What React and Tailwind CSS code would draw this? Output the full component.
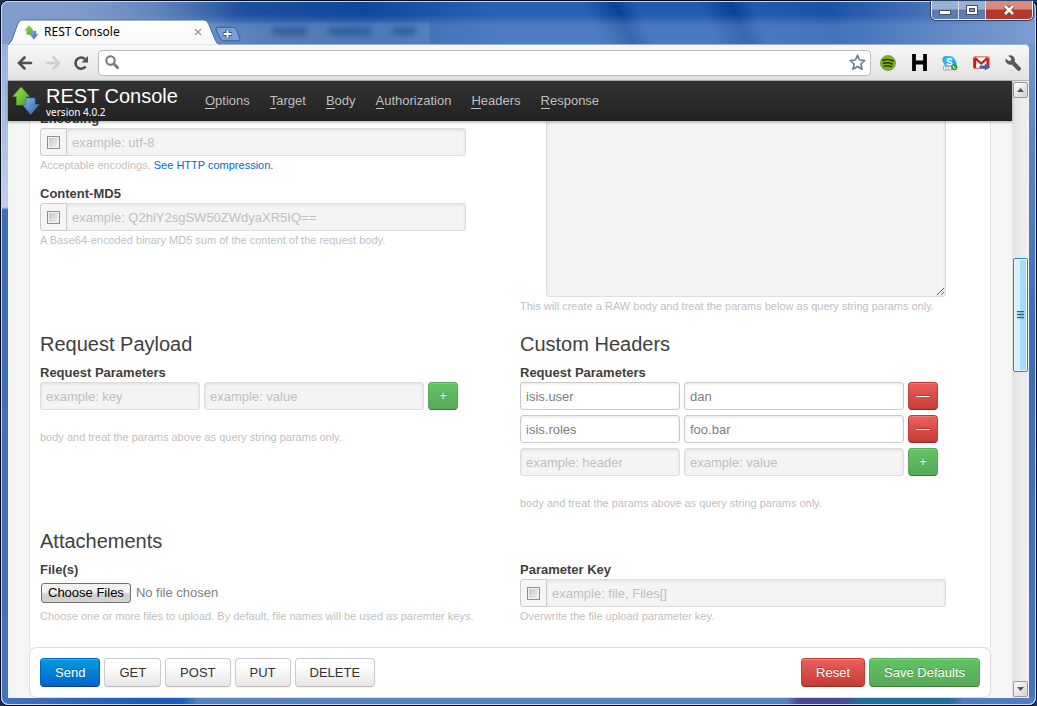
import React from "react";

const FONT = "font-['Liberation_Sans',Arial,sans-serif]";
const FIELD =
  "h-7 min-w-0 border border-[#ddd] bg-[#f4f4f4] px-[5px] text-[13px] text-[#808080] placeholder:text-[#bfbfbf] placeholder:opacity-100 shadow-[inset_0_1px_3px_rgba(0,0,0,0.1)] outline-none";
const FILLED =
  "h-7 min-w-0 rounded-[3px] border border-[#ccc] bg-white px-[5px] text-[13px] text-[#808080] shadow-[inset_0_1px_3px_rgba(0,0,0,0.1)] outline-none";
const BTN = "h-[29px] cursor-pointer rounded-[4px] border px-[14px] text-[13px] leading-[18px]";
const PLAIN =
  "border-[#ccc] border-b-[#bbb] bg-linear-to-b from-white from-25% to-[#e6e6e6] text-[#333] shadow-[inset_0_1px_0_rgba(255,255,255,0.2),0_1px_2px_rgba(0,0,0,0.05)]";
const RED =
  "border-[#c43c35] border-b-[#882a25] bg-linear-to-b from-[#ee5f5b] to-[#c43c35] text-white [text-shadow:0_-1px_0_rgba(0,0,0,0.25)] shadow-[inset_0_1px_0_rgba(255,255,255,0.2)]";
const GREEN =
  "border-[#57a957] border-b-[#3d773d] bg-linear-to-b from-[#62c462] to-[#57a957] text-white [text-shadow:0_-1px_0_rgba(0,0,0,0.25)] shadow-[inset_0_1px_0_rgba(255,255,255,0.2)]";
const BLUE =
  "border-[#0064cd] border-b-[#003f81] bg-linear-to-b from-[#049cdb] to-[#0064cd] text-white [text-shadow:0_-1px_0_rgba(0,0,0,0.25)] shadow-[inset_0_1px_0_rgba(255,255,255,0.2)]";

function Logo({ className }) {
  return (
    <svg className={className} viewBox="0 0 28 30" aria-hidden="true">
      <defs>
        <linearGradient id="lg" x1="0" y1="0" x2="1" y2="1">
          <stop offset="0" stopColor="#a4e455" />
          <stop offset="1" stopColor="#4aa51a" />
        </linearGradient>
        <linearGradient id="lb" x1="0" y1="0" x2="1" y2="1">
          <stop offset="0" stopColor="#8db8e8" />
          <stop offset="1" stopColor="#2c5f9f" />
        </linearGradient>
      </defs>
      <path d="M9 1 L17.5 10.5 H14 V19 H4.5 V10.5 H0.8 Z" fill="url(#lg)" stroke="#54a823" strokeWidth=".6" />
      <path d="M14 12 H23 V18.5 H27 L18.7 28.5 L10.5 18.5 H14 Z" fill="url(#lb)" stroke="#4474b0" strokeWidth=".6" />
    </svg>
  );
}

function TickBox({ label }) {
  return (
    <span className="flex h-7 w-[27px] shrink-0 items-center justify-center rounded-l-[3px] border border-[#ccc] bg-[#f5f5f5]">
      <input
        type="checkbox"
        aria-label={label}
        className="size-[13px] appearance-none border border-[#8e8f8f] bg-linear-to-br from-[#b9bec8] to-[#fafafa] shadow-[inset_0_0_0_1px_#f4f4f4]"
      />
    </span>
  );
}

function OptionalField({ id, label, placeholder, children }) {
  return (
    <div>
      <label htmlFor={id} className="block text-[13px] leading-[18px] font-bold text-[#404040]">{label}</label>
      <div className="flex max-w-[426px]">
        <TickBox label={"Enable " + label} />
        <input id={id} placeholder={placeholder} className={"flex-1 rounded-r-[3px] border-l-0 " + FIELD} />
      </div>
      <Hint>{children}</Hint>
    </div>
  );
}

function Hint({ children }) {
  return <p className="text-[11px] leading-[18px] whitespace-nowrap text-[#bfbfbf]">{children}</p>;
}

function Heading({ children }) {
  return <h2 className="mb-1 text-xl leading-8 text-[#404040]">{children}</h2>;
}

function ParamRow({ name, value, keyHint }) {
  const filled = Boolean(name);
  const cls = filled ? FILLED : "rounded-[3px] " + FIELD;
  return (
    <div className="flex gap-1">
      <input aria-label="Parameter name" defaultValue={name} placeholder={keyHint} className={"w-40 " + cls} />
      <input aria-label="Parameter value" defaultValue={value} placeholder="example: value" className={"w-55 " + cls} />
      <button
        type="button"
        aria-label={filled ? "Remove parameter" : "Add parameter"}
        className={"flex h-7 w-[30px] items-center justify-center rounded-[4px] border text-[13px] " + (filled ? RED : GREEN)}
      >
        {filled ? "—" : "+"}
      </button>
    </div>
  );
}

function Params({ title, rows, keyHint }) {
  return (
    <section>
      <Heading>{title}</Heading>
      <h3 className="text-[13px] leading-[18px] font-bold text-[#404040]">Request Parameters</h3>
      <div className="mb-[18px] flex flex-col gap-[5px]">
        {rows.map((r) => (
          <ParamRow key={r[0]} name={r[0]} value={r[1]} />
        ))}
        <ParamRow keyHint={keyHint} />
      </div>
      <Hint>body and treat the params above as query string params only.</Hint>
    </section>
  );
}

function TitleBar() {
  return (
    <div className="relative flex h-[43px] shrink-0 items-end">
      <div className="absolute top-[20px] left-[180px] h-[22px] w-[242px] bg-white/10 blur-[1px]" />
      <div className="absolute top-[25px] left-[264px] flex gap-5 blur-[3px]" aria-hidden="true">
        <span className="h-2 w-9 rounded bg-[#234f91]/70" />
        <span className="h-2 w-11 rounded bg-[#234f91]/70" />
        <span className="h-2 w-6 rounded bg-[#234f91]/70" />
      </div>
      <div className="relative flex h-[26px] w-[215px] items-center pr-[19px] pl-4">
        <svg className="absolute inset-0 h-full w-full" viewBox="0 0 215 26" preserveAspectRatio="none" aria-hidden="true">
          <defs>
            <linearGradient id="tab" x1="0" y1="0" x2="0" y2="1">
              <stop offset="0" stopColor="#fff" />
              <stop offset="1" stopColor="#f8f8f8" />
            </linearGradient>
          </defs>
          <path d="M0 26 C3 23 4 21 5 18 L9 7 C11 2 12 1 16 1 H194 C198 1 199 2 201 6 L206 18 C208 23 209 25 212 26 Z" fill="url(#tab)" stroke="#4b6c9f" strokeWidth="1" />
          <path d="M1 26 H211" stroke="#f8f8f8" strokeWidth="1.4" />
        </svg>
        <Logo className="relative size-[15px]" />
        <span className="relative ml-[5px] flex-1 font-['Noto_Sans','Open_Sans',sans-serif] text-xs text-black">REST Console</span>
        <button type="button" aria-label="Close tab" className="relative flex size-3 items-center justify-center">
          <svg className="size-2" viewBox="0 0 8 8" aria-hidden="true">
            <path d="M1 1 L7 7 M7 1 L1 7" stroke="#999" strokeWidth="1.3" />
          </svg>
        </button>
      </div>
      <button type="button" aria-label="New tab" className="relative mb-[3px] -ml-2 h-4 w-[26px]">
        <svg className="h-full w-full" viewBox="0 0 27 16" aria-hidden="true">
          <path d="M3 1 H18 Q21 1 22 3 L26 13 Q26 15 24 15 H9 Q6 15 5 12 L1 3 Q1 1 3 1 Z" fill="#7b9fd3" stroke="#315a98" />
          <path d="M13 3.5 V12.5 M8.5 8 H17.5" stroke="#38577f" strokeWidth="4" />
          <path d="M13 4 V12 M9 8 H17" stroke="#fff" strokeWidth="2" />
        </svg>
      </button>
      <div className="absolute top-[-1px] right-[-4px] flex h-[19px] overflow-hidden rounded-b-[5px] border border-t-0 border-[#eef3fb] shadow-[0_0_0_1px_#2a4370]">
        <button type="button" aria-label="Minimize" className="flex w-[27px] items-end justify-center border-r border-[#d5deee] bg-linear-to-b from-[#9bb1d2] from-45% to-[#5d7cb3] to-50% pb-1">
          <svg className="h-[5px] w-3" viewBox="0 0 12 5" aria-hidden="true"><rect x=".5" y=".5" width="11" height="4" fill="#fff" stroke="#465069" /></svg>
        </button>
        <button type="button" aria-label="Maximize" className="flex w-[27px] items-center justify-center border-r border-[#d5deee] bg-linear-to-b from-[#9bb1d2] from-45% to-[#5d7cb3] to-50%">
          <svg className="h-[10px] w-3" viewBox="0 0 12 10" aria-hidden="true"><rect x=".5" y=".5" width="11" height="9" fill="#fff" stroke="#465069" /><rect x="3.5" y="3.5" width="5" height="3" fill="#7c96c4" stroke="#465069" /></svg>
        </button>
        <button type="button" aria-label="Close" className="flex w-[46px] items-center justify-center bg-linear-to-b from-[#d98a7e] from-45% to-[#b5382b] to-50%">
          <svg className="h-[10px] w-3" viewBox="0 0 12 10" aria-hidden="true">
            <path d="M2 1 L10 9 M10 1 L2 9" stroke="#5b3440" strokeWidth="4.4" />
            <path d="M2 1 L10 9 M10 1 L2 9" stroke="#fff" strokeWidth="2.8" />
          </svg>
        </button>
      </div>
    </div>
  );
}

function Toolbar() {
  return (
    <div className="flex h-9 shrink-0 items-center rounded-tr-[4px] border-b border-[#b2b4b6] bg-linear-to-b from-[#f8f8f8] to-[#e2e2e2] pr-2 pl-[9px]">
      <button type="button" aria-label="Back">
        <svg className="size-4" viewBox="0 0 16 16" fill="none" stroke="#505050" strokeWidth="2.6" strokeLinecap="round" aria-hidden="true"><path d="M14 8 H3 M7.5 2.5 L2 8 L7.5 13.5" /></svg>
      </button>
      <button type="button" aria-label="Forward" className="ml-3">
        <svg className="size-4" viewBox="0 0 16 16" fill="none" stroke="#cfcfcf" strokeWidth="2.6" strokeLinecap="round" aria-hidden="true"><path d="M2 8 H13 M8.5 2.5 L14 8 L8.5 13.5" /></svg>
      </button>
      <button type="button" aria-label="Reload" className="ml-3">
        <svg className="size-4" viewBox="0 0 16 16" aria-hidden="true"><path d="M12.6 11.5 A5.6 5.6 0 1 1 12 4" fill="none" stroke="#505050" strokeWidth="2.6" /><path d="M15 1 V7.5 H8.5 Z" fill="#505050" /></svg>
      </button>
      <div className="ml-[9px] flex h-[26px] flex-1 items-center rounded-[4px] border border-[#bcbcbc] bg-white pr-1 pl-1.5">
        <svg className="size-[15px]" viewBox="0 0 15 15" fill="none" stroke="#777" aria-hidden="true"><circle cx="5.5" cy="5.5" r="4.2" strokeWidth="2" /><path d="M9 9 L13.5 13.5" strokeWidth="2.8" /></svg>
        <input aria-label="Address" className="h-full min-w-0 flex-1 px-2 text-[13px] outline-none" />
        <button type="button" aria-label="Bookmark">
          <svg className="size-[17px]" viewBox="0 0 17 17" aria-hidden="true"><path d="M8.5 1.2 L10.6 6 L15.8 6.5 L11.9 10 L13.1 15.3 L8.5 12.5 L3.9 15.3 L5.1 10 L1.2 6.5 L6.4 6 Z" fill="#fff" stroke="#6b7891" strokeWidth="1.6" strokeLinejoin="round" /></svg>
        </button>
      </div>
      <div className="ml-[9px] flex items-center gap-[15px]">
        <button type="button" aria-label="Spotify">
          <svg className="size-4" viewBox="0 0 16 16" aria-hidden="true"><circle cx="8" cy="8" r="7.6" fill="#7ab317" stroke="#5f8c12" strokeWidth=".6" /><path d="M3 5.3 Q8 3.4 13.2 6 M3.6 8.3 Q8 6.8 12.3 9 M4.2 11.1 Q8 10 11.4 11.7" fill="none" stroke="#1f3303" strokeWidth="1.5" strokeLinecap="round" /></svg>
        </button>
        <button type="button" aria-label="H extension">
          <svg className="h-[17px] w-4" viewBox="0 0 16 17" aria-hidden="true"><path d="M3 0 V17 M14 0 V17 M3 8.5 H14" stroke="#000" strokeWidth="3.8" /></svg>
        </button>
        <button type="button" aria-label="Skype">
          <svg className="size-4" viewBox="0 0 17 16" aria-hidden="true">
            <circle cx="4.5" cy="4.5" r="4" fill="#21aae6" /><circle cx="8" cy="7" r="6.4" fill="#35b4ec" /><circle cx="11.5" cy="9" r="4" fill="#21aae6" />
            <path d="M10.8 4.6 Q8 2.6 6 4.2 Q5 6 8 6.8 Q11 7.4 10.2 9.2 Q8 10.8 5.2 8.8" fill="none" stroke="#fff" strokeWidth="1.7" />
            <path d="M1.5 11.5 H10 V15.5 H1.5 Z M4.3 11.5 V15.5 M7.2 11.5 V15.5" fill="#fff" stroke="#8b9399" strokeWidth=".8" />
            <circle cx="13" cy="12.5" r="3.2" fill="#2a9b2f" /><path d="M12 11 Q12 13.5 14.3 13.8" fill="none" stroke="#fff" strokeWidth="1.2" />
          </svg>
        </button>
        <button type="button" aria-label="Mail">
          <svg className="h-4 w-[17px]" viewBox="0 0 18 16" aria-hidden="true">
            <rect x=".5" y="1.5" width="16.5" height="12" rx="1" fill="#fff" stroke="#d9453c" />
            <path d="M2 13.5 V3" stroke="#d8170f" strokeWidth="2.6" />
            <path d="M15.5 13.5 V3" stroke="#d8170f" strokeWidth="2.6" />
            <path d="M2 2.5 L8.75 8.5 L15.5 2.5" fill="none" stroke="#d8170f" strokeWidth="2.4" />
            <path d="M7 10.6 H12.5 V8.4 L18 12.2 L12.5 16 V13.8 H7 Z" fill="#3562b5" />
          </svg>
        </button>
        <button type="button" aria-label="Settings">
          <svg className="size-4" viewBox="0 0 16 16" aria-hidden="true"><path d="M3.2 .8 A4.7 4.7 0 0 1 9.6 6.6 L15.3 12.2 A2 2 0 0 1 12.3 15.2 L6.7 9.5 A4.7 4.7 0 0 1 .8 3.4 L3.7 6 L6 5.6 L6.2 3.6 Z" fill="#595959" /></svg>
        </button>
      </div>
    </div>
  );
}

function ScrollBar() {
  return (
    <div className="flex w-[17px] shrink-0 flex-col bg-linear-to-r from-[#e3e3e3] to-[#f0f0f0] px-px pt-px">
      <button type="button" aria-label="Scroll up" className="flex h-4 items-center justify-center rounded-[2px] border border-[#9b9b9b] bg-linear-to-br from-white to-[#d0d0d0]">
        <svg className="h-1 w-[7px]" viewBox="0 0 7 4" aria-hidden="true"><path d="M3.5 0 L7 4 H0 Z" fill="#555" /></svg>
      </button>
      <div className="min-h-0 flex-[160]" />
      <div className="flex h-[114px] items-center justify-center rounded-[2px] border border-[#3c7fb1] bg-linear-to-r from-[#d9f0fc] from-45% to-[#a6daf5] to-50% shadow-[inset_0_0_0_1px_#eefaff]">
        <svg className="h-2 w-[7px]" viewBox="0 0 7 8" aria-hidden="true"><path d="M0 .5 H7 M0 3.5 H7 M0 6.5 H7" stroke="#28678e" strokeWidth="1.4" /></svg>
      </div>
      <div className="min-h-0 flex-[310]" />
      <button type="button" aria-label="Scroll down" className="mb-px flex h-4 items-center justify-center rounded-[2px] border border-[#9b9b9b] bg-linear-to-br from-white to-[#d0d0d0]">
        <svg className="h-1 w-[7px]" viewBox="0 0 7 4" aria-hidden="true"><path d="M0 0 H7 L3.5 4 Z" fill="#555" /></svg>
      </button>
    </div>
  );
}

const NAV = ["Options", "Target", "Body", "Authorization", "Headers", "Response"];

export default function App() {
  return (
    <div className={"h-screen bg-[#1b3151] " + FONT}>
      <div className="flex h-full flex-col rounded-[8px] border border-[#02091c] bg-[linear-gradient(to_right,#4472bd_0%,#1d5fb8_12.5%,#1d5fb8_17.5%,#5580c2_19%,#5580c2_76%,#4a4a94_77%,#4a4a94_81.5%,#1f6d99_83%,#1f6d99_91.5%,#4f7cc3_93%),linear-gradient(to_bottom,#7d9fd3_0px,#6088c8_120px,#3f6db8_320px,#4472bd_100%),linear-gradient(to_bottom,#8ea9d6_0px,#c0cee8_206px,#3e6cb5_209px,#4472bd_100%)] bg-size-[100%_8px,8px_100%,100%_100%] bg-position-[left_bottom,right_top,left_top] bg-no-repeat shadow-[inset_0_0_0_1px_#c8daf3]">
        <div className="flex min-h-0 flex-1 flex-col rounded-[7px] border border-[#c8daf3] bg-[linear-gradient(100deg,#7f9ccb_0px,#7f9ccb_60px,transparent_230px),linear-gradient(to_bottom,transparent_0px,transparent_12px,rgba(160,190,230,0.3)_24px,rgba(160,190,230,0.3)_43px),linear-gradient(65deg,transparent_0%,#1c4f9c_25%,#0f479b_36%,#2a60b2_48%,#2a60b2_57%,#0a4195_60%,#235aaf_62%,#235aaf_68%,#0a4195_71%,#235aaf_73%,#1b52a6_80%,#7395cb_100%)] bg-size-[100%_42px] bg-no-repeat px-[6px] pb-[6px]">
          <TitleBar />
          <Toolbar />
          <div className="flex min-h-0 flex-1">
            <div className="flex min-w-0 flex-1 flex-col bg-[#f4f5f5]">
              <header className="relative z-10 flex h-10 shrink-0 items-center bg-linear-to-b from-[#333] to-[#222] pl-1 shadow-[0_1px_3px_rgba(0,0,0,0.35)]">
                <Logo className="h-[30px] w-7" />
                <div className="ml-1.5 text-white">
                  <h1 className="text-xl leading-[22px]">REST Console</h1>
                  <p className="font-['Noto_Sans','Open_Sans',sans-serif] text-[10px] leading-[10px]">version 4.0.2</p>
                </div>
                <nav className="ml-[27px] flex gap-5 text-[13px] text-[#bfbfbf]">
                  {NAV.map((n) => (
                    <a key={n} href={"#" + n.toLowerCase()}>
                      <span className="border-b border-[#bfbfbf]">{n[0]}</span>
                      {n.slice(1)}
                    </a>
                  ))}
                </nav>
              </header>
              <main className="mx-auto min-h-0 w-full max-w-[962px] flex-1 overflow-hidden border-x border-[#e5e5e5] bg-white px-[10px]">
                <form className="-mt-[11px] grid grid-cols-2 gap-x-[20px] gap-y-[13px]">
                  <div className="flex flex-col gap-[11px]">
                    <OptionalField id="encoding" label="Encoding" placeholder="example: utf-8">
                      Acceptable encodings. <a href="#compression" className="text-[#0069d6]">See HTTP compression.</a>
                    </OptionalField>
                    <OptionalField id="md5" label="Content-MD5" placeholder="example: Q2hlY2sgSW50ZWdyaXR5IQ==">
                      A Base64-encoded binary MD5 sum of the content of the request body.
                    </OptionalField>
                  </div>
                  <div>
                    <textarea aria-label="Raw body" className="ml-[26px] block h-[187px] w-[400px] resize rounded-b-[3px] border border-[#ddd] bg-[#f4f4f4] shadow-[inset_0_1px_3px_rgba(0,0,0,0.1)] outline-none" />
                    <Hint>This will create a RAW body and treat the params below as query string params only.</Hint>
                  </div>
                  <Params title="Request Payload" rows={[]} keyHint="example: key" />
                  <Params title="Custom Headers" rows={[["isis.user", "dan"], ["isis.roles", "foo.bar"]]} keyHint="example: header" />
                  <section>
                    <Heading>Attachements</Heading>
                    <label htmlFor="files" className="block text-[13px] leading-[18px] font-bold text-[#404040]">File(s)</label>
                    <div className="flex h-7 items-center">
                      <button id="files" type="button" className="ml-px h-5 rounded-[3px] border border-[#707070] bg-linear-to-b from-[#f2f2f2] from-45% to-[#d2d2d2] to-55% px-1.5 text-[13px] leading-[18px] text-black">
                        Choose Files
                      </button>
                      <span className="ml-[5px] text-[13px] text-[#808080]">No file chosen</span>
                    </div>
                    <Hint>Choose one or more files to upload. By default, file names will be used as paremter keys.</Hint>
                  </section>
                  <section className="pt-9">
                    <OptionalField id="pkey" label="Parameter Key" placeholder="example: file, Files[]">
                      Overwrite the file upload parameter key.
                    </OptionalField>
                  </section>
                </form>
              </main>
              <footer className="mx-auto flex w-full max-w-[962px] shrink-0 gap-1 rounded-[8px] border border-[#ddd] bg-white p-[10px]">
                <button type="button" className={BTN + " " + BLUE}>Send</button>
                <button type="button" className={BTN + " " + PLAIN}>GET</button>
                <button type="button" className={BTN + " " + PLAIN}>POST</button>
                <button type="button" className={BTN + " " + PLAIN}>PUT</button>
                <button type="button" className={BTN + " " + PLAIN}>DELETE</button>
                <button type="button" className={"ml-auto " + BTN + " " + RED}>Reset</button>
                <button type="button" className={BTN + " " + GREEN}>Save Defaults</button>
              </footer>
            </div>
            <ScrollBar />
          </div>
        </div>
      </div>
    </div>
  );
}
